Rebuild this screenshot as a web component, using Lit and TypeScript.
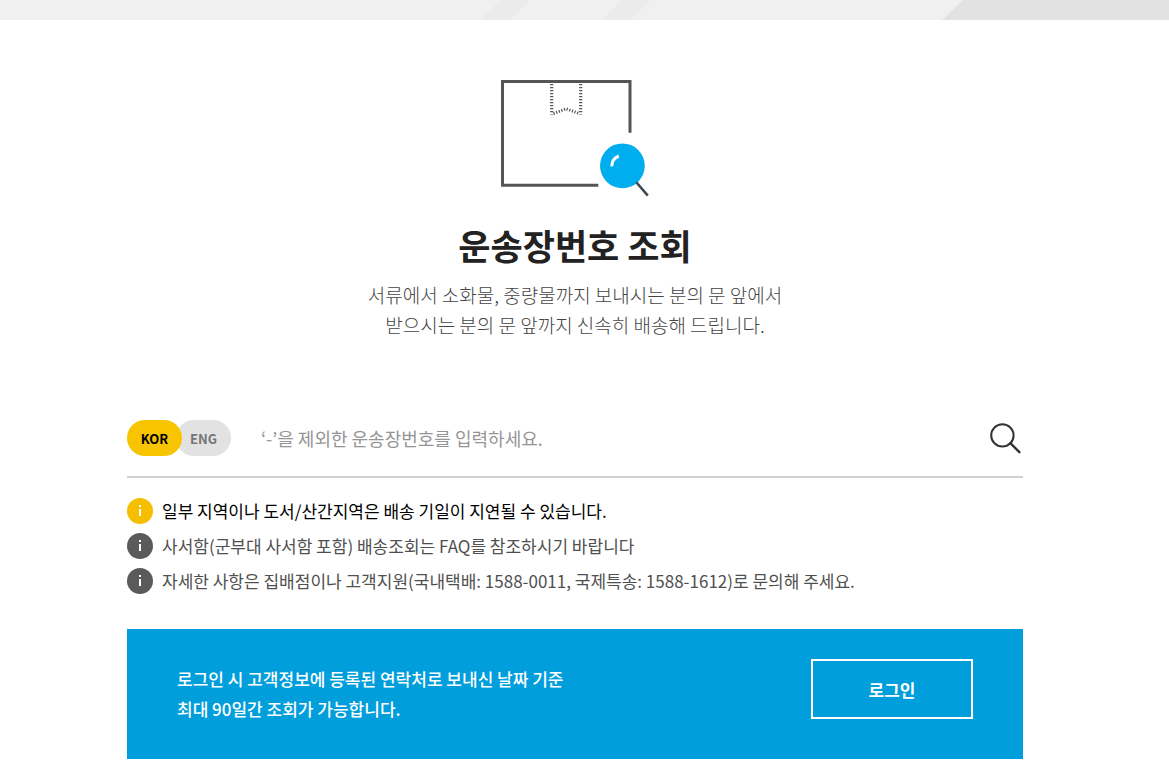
import { LitElement, html, css } from "lit";
import { customElement, state } from "lit/decorators.js";
import { classMap } from "lit/directives/class-map.js";

const LANGS = ["KOR", "ENG"];

const NOTICES = [
  { text: "일부 지역이나 도서/산간지역은 배송 기일이 지연될 수 있습니다.", strong: true },
  { text: "사서함(군부대 사서함 포함) 배송조회는 FAQ를 참조하시기 바랍니다", strong: false },
  { text: "자세한 사항은 집배점이나 고객지원(국내택배: 1588-0011, 국제특송: 1588-1612)로 문의해 주세요.", strong: false },
];

@customElement("app-root")
export class AppRoot extends LitElement {
  @state() lang = "KOR";

  static styles = css`
    :host {
      display: block;
      min-height: 100vh;
      background: #fff;
      color: #505050;
      font-family: "Noto Sans CJK KR", "Noto Sans", sans-serif;
      font-size: 17px;
    }
    * { box-sizing: border-box; }
    svg { display: block; }
    button { cursor: pointer; }
    .band { width: 100%; height: 20px; background: #f0f0f0; }
    .page { padding-right: 19px; }
    main { max-width: 896px; margin: 0 auto; padding-top: 60px; }
    .hero { display: flex; flex-direction: column; align-items: center; text-align: center; }
    h1 { margin: 20px 0 0; font-size: 35px; line-height: 54px; font-weight: 700; color: #222; }
    .lead { margin: 8px 0 0; font-size: 19px; line-height: 30px; font-weight: 300; color: #444; }
    .search {
      display: flex;
      align-items: center;
      height: 78px;
      margin-top: 60px;
      border-bottom: 2px solid #d0d0d0;
    }
    .search input {
      flex: 1;
      min-width: 0;
      margin-left: 30px;
      padding: 0;
      border: 0;
      outline: 0;
      background: none;
      font: inherit;
      font-size: 18px;
      color: #222;
    }
    .search input::placeholder { color: #959595; opacity: 1; }
    .langs { display: flex; }
    .lang {
      width: 55px;
      height: 36px;
      padding: 0;
      border: 0;
      border-radius: 18px;
      background: #e2e2e2;
      color: #757575;
      font-family: inherit;
      font-size: 13px;
      font-weight: 700;
    }
    .lang + .lang { margin-left: -6px; }
    .lang.on { z-index: 1; background: #f8c400; color: #000; }
    .go { padding: 0; border: 0; background: none; }
    .notices {
      display: flex;
      flex-direction: column;
      gap: 9px;
      margin: 20px 0 0;
      padding: 0;
      list-style: none;
      line-height: 26px;
    }
    .notices li { display: flex; gap: 9px; }
    .notices svg { flex: none; fill: #5a5a5a; }
    .notices .mark { fill: #fff; }
    .notices .strong { color: #000; }
    .notices .strong svg { fill: #f5be00; }
    .login {
      display: flex;
      align-items: flex-start;
      justify-content: space-between;
      margin-top: 35px;
      padding: 30px 50px 35px;
      background: #009edb;
      color: #fff;
    }
    .login p { margin: 0; padding-top: 5px; line-height: 30px; font-weight: 500; }
    .login button {
      width: 162px;
      height: 60px;
      border: 2px solid #fff;
      background: none;
      color: #fff;
      font: inherit;
      font-weight: 700;
    }
  `;

  private infoIcon() {
    return html`<svg width="26" height="26" viewBox="0 0 26 26" aria-hidden="true">
      <circle cx="13" cy="13" r="13"></circle>
      <rect class="mark" x="12" y="7" width="2" height="2"></rect>
      <rect class="mark" x="12" y="11" width="2" height="7"></rect>
    </svg>`;
  }

  render() {
    return html`
      <svg class="band" aria-hidden="true">
        <path fill="#ebebeb" d="M501 0h29l-21 20h-29zM622 0h29l-20 20h-29z"></path>
        <path fill="#e2e2e2" d="M963 0H6000V20H942z"></path>
      </svg>
      <div class="page">
        <main>
          <section class="hero">
            <svg width="148" height="118" viewBox="0 0 148 118" fill="none" aria-hidden="true">
              <path d="M97.3 105.3H1.5V1.5H129V52.7" stroke="#555" stroke-width="3"></path>
              <path d="M50.7 4V34.5M79.7 4V34.5" stroke="#555" stroke-width="3.2" stroke-dasharray="1.2 1.8"></path>
              <path d="M52.5 33.6L65.2 28.8L78.5 33.6" stroke="#555" stroke-width="3" stroke-dasharray="1.2 1.6"></path>
              <circle cx="121.4" cy="85.8" r="22.4" fill="#00adef"></circle>
              <path d="M110.8 86.4C110.7 81.5 113.2 77.8 117.8 76" stroke="#fff" stroke-width="3"></path>
              <path d="M135.3 102.2L146.8 115.6" stroke="#3b4650" stroke-width="2.5"></path>
            </svg>
            <h1>운송장번호 조회</h1>
            <p class="lead">
              서류에서 소화물, 중량물까지 보내시는 분의 문 앞에서<br />받으시는 분의 문 앞까지 신속히 배송해 드립니다.
            </p>
          </section>

          <form class="search" @submit=${(e: Event) => e.preventDefault()}>
            <div class="langs">
              ${LANGS.map(
                (l) => html`<button
                  type="button"
                  class=${classMap({ lang: true, on: this.lang === l })}
                  aria-pressed=${this.lang === l}
                  @click=${() => (this.lang = l)}
                >${l}</button>`
              )}
            </div>
            <input type="text" aria-label="운송장번호" placeholder="‘-’을 제외한 운송장번호를 입력하세요." />
            <button class="go" type="submit" aria-label="조회">
              <svg width="33" height="32" viewBox="0 0 33 32" fill="none" stroke="#333" stroke-width="2">
                <circle cx="12.4" cy="13.4" r="11.2"></circle>
                <path d="M20.4 21.2L29.4 30.2" stroke-width="2.4" stroke-linecap="round"></path>
              </svg>
            </button>
          </form>

          <ul class="notices">
            ${NOTICES.map(
              (n) => html`<li class=${classMap({ strong: n.strong })}>${this.infoIcon()}<span>${n.text}</span></li>`
            )}
          </ul>

          <section class="login">
            <p>로그인 시 고객정보에 등록된 연락처로 보내신 날짜 기준<br />최대 90일간 조회가 가능합니다.</p>
            <button type="button">로그인</button>
          </section>
        </main>
      </div>
    `;
  }
}
